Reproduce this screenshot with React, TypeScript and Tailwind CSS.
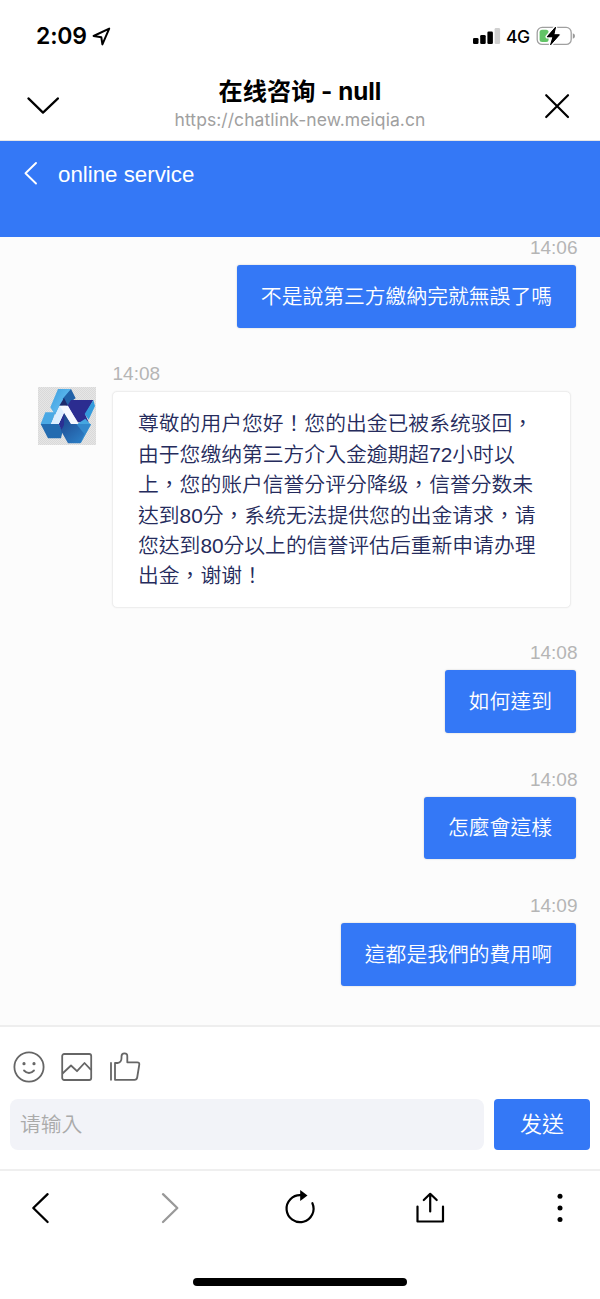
import React from "react";

const sans = "font-['Liberation_Sans','Noto_Sans_CJK_TC',sans-serif]";

function StatusBar() {
  return (
    <div className="flex h-[72px] items-center justify-between pl-9 pr-[24px] font-['Inter',sans-serif]">
      <div className="flex items-center">
        <span className="w-[52px] whitespace-nowrap pt-px text-[23px] font-semibold leading-none tracking-[-0.2px]">2:09</span>
        <svg className="ml-[3px]" width="22" height="22" viewBox="0 0 22 22" fill="none" stroke="#000" strokeWidth="2" strokeLinejoin="round">
          <path d="M2.6 11 18.2 3.6 11.4 19.4 10.3 12.2Z" />
        </svg>
      </div>
      <div className="flex items-center">
        <svg width="28" height="18" viewBox="0 0 28 18">
          <rect x="0" y="11" width="5.5" height="6" rx="1.3" />
          <rect x="7.2" y="8" width="5.5" height="9" rx="1.3" />
          <rect x="14.4" y="4.5" width="5.5" height="12.5" rx="1.3" />
          <rect x="21.6" y="1" width="5.5" height="16" rx="1.3" fill="#d0d0d0" />
        </svg>
        <span className="ml-[5px] w-[25px] whitespace-nowrap pt-[2px] text-[17.5px] font-medium leading-none tracking-[-0.4px]">4G</span>
        <svg className="ml-[5px]" width="40" height="22" viewBox="0 0 40 22">
          <rect x="1.2" y="2.4" width="34" height="17" rx="5" fill="#fff" stroke="#a0a0a0" strokeWidth="1.3" />
          <rect x="3.6" y="4.8" width="9" height="12.2" rx="2.5" fill="#62c466" />
          <path d="M36.8 8.2q2.2.7 2.2 2.8t-2.2 2.8Z" fill="#999" />
          <path d="M19.5 2.2 11.2 11.8H17L14.6 19.8 23.4 9.8H17.8Z" fill="#000" stroke="#fff" strokeWidth="3.6" strokeLinejoin="round" paintOrder="stroke" />
          <path d="M19.5 2.2 11.2 11.8H17L14.6 19.8 23.4 9.8H17.8Z" fill="#000" stroke="#000" strokeWidth="1" strokeLinejoin="round" />
        </svg>
      </div>
    </div>
  );
}

function TitleBar() {
  return (
    <div className="flex h-[69px] items-start justify-between border-b border-[#e6e6e6] px-[26px]">
      <svg className="mt-[21px]" width="34" height="24" viewBox="0 0 34 24" fill="none" stroke="#000" strokeWidth="2.2" strokeLinecap="round" strokeLinejoin="round">
        <path d="M2.4 5.4 17 19.6 32 5.4" />
      </svg>
      <div className="flex flex-col items-center">
        <div className="mt-[6px] whitespace-nowrap text-[24.2px] font-bold leading-[28px] font-['Inter','Noto_Sans_CJK_SC',sans-serif]">在线咨询 - null</div>
        <div className="mt-[4px] whitespace-nowrap text-[17.5px] leading-[20px] tracking-[0.07px] text-[#a0a0a0] font-['Inter',sans-serif]">https://chatlink-new.meiqia.cn</div>
      </div>
      <svg className="mt-[21px]" width="34" height="26" viewBox="-4 0 34 26" fill="none" stroke="#000" strokeWidth="2.2" strokeLinecap="round">
        <path d="M2.2 2.2 24 24M24 2.2 2.2 24" />
      </svg>
    </div>
  );
}

function Time({ children }: { children: string }) {
  return <div className="h-[22px] text-[19px] leading-[22px] text-[#b5b5b5]">{children}</div>;
}

function Sent({ time, text }: { time: string; text: string }) {
  return (
    <div className="mb-[35.3px] flex flex-col items-end pr-6">
      <div className="-mr-[1.5px]"><Time>{time}</Time></div>
      <div className="mt-[6px] flex h-[62.5px] items-center whitespace-nowrap rounded-[3px] bg-[#3478f6] px-[24px] pt-px text-[20.8px] font-[350] leading-[30.4px] text-white shadow-[0_0_2px_rgba(0,0,0,0.2)] mb-[0.5px]">{text}</div>
    </div>
  );
}

const replyLines = [
  "尊敬的用户您好！您的出金已被系统驳回，",
  "由于您缴纳第三方介入金逾期超72小时以",
  "上，您的账户信誉分评分降级，信誉分数未",
  "达到80分，系统无法提供您的出金请求，请",
  "您达到80分以上的信誉评估后重新申请办理",
  "出金，谢谢！",
];

function Logo() {
  return (
    <svg className="mt-[24px] shrink-0" width="58" height="58" viewBox="6 9 174 174">
      <defs>
        <pattern id="checker" width="6" height="6" patternUnits="userSpaceOnUse">
          <rect width="6" height="6" fill="#e6e6e6" />
          <path d="M0 0h3v3H0zM3 3h3v3H3z" fill="#d9d9d9" />
        </pattern>
        <linearGradient id="sky" x1="0" y1="0" x2="1" y2="1">
          <stop offset="0" stopColor="#3b9ddd" />
          <stop offset="0.5" stopColor="#58b4ec" />
          <stop offset="1" stopColor="#2a80c4" />
        </linearGradient>
        <linearGradient id="deep" x1="0" y1="0" x2="0.6" y2="1">
          <stop offset="0" stopColor="#1b3f86" />
          <stop offset="1" stopColor="#2b79c0" />
        </linearGradient>
      </defs>
      <rect x="6" y="9" width="174" height="174" fill="url(#checker)" />
      <path d="M66 15H105L62 100 43 70Z" fill="url(#sky)" />
      <path d="M105 15 119 43 108 50 92 68 80 44Z" fill="#2161a8" />
      <path d="M84 42 96 65H70Z" fill="#1c2a6c" />
      <path d="M105 48H172L148 92 158 115H126L94 65Z" fill="#2b2c90" />
      <path d="M172 48 177 66 158 107 146 90Z" fill="#349bdc" />
      <path d="M28 85H58L46 120H14Z" fill="#4aa8e4" />
      <path d="M14 120H68L80 141 75 163H36Z" fill="#236bb0" />
      <path d="M68 120 84 85 105 120 96 150H82Z" fill="#2a3093" />
      <path d="M123 120 148 104 165 122 134 178 112 150Z" fill="#45a6e0" />
      <path d="M118 120H165L134 178 110 152Z" fill="#3388cc" />
      <path d="M84 85 105 120H121L145 150 132 178H96L75 140 84 123Z" fill="url(#deep)" />
      <path d="M71 65H96L127 120H105L84 86 68 120H45Z" fill="#f5f8ff" />
      <path d="M71 65 84 86 68 120H45Z" fill="#dceeff" />
    </svg>
  );
}

function Received() {
  return (
    <div className="mb-[34.7px] flex pl-[38px]">
      <Logo />
      <div className="ml-4">
        <div className="pl-[0.5px]"><Time>14:08</Time></div>
        <div className="mt-[6px] h-[216.5px] w-[459px] rounded-[5px] border border-[#eeeeee] bg-white pl-[25px] pt-[17px] text-[20.8px] font-[350] leading-[30.4px] text-[#252b5c] shadow-[0_0_2px_rgba(0,0,0,0.06)]">
          {replyLines.map((line) => (
            <div key={line} className="whitespace-nowrap">{line}</div>
          ))}
        </div>
      </div>
    </div>
  );
}

function Composer() {
  return (
    <div className="h-[144px] border-t-2 border-[#eeeeee] bg-white px-[10px]">
      <div className="flex h-[72px] items-center pl-[2px] pt-[7px]">
        <svg width="34" height="34" viewBox="0 0 34 34" fill="none" stroke="#666" strokeWidth="1.8" strokeLinecap="round">
          <circle cx="17" cy="17" r="14.6" />
          <path d="M12 20.5Q17 25.5 22 20.5" />
          <circle cx="12" cy="13.7" r="1" fill="#666" strokeWidth="1.2" />
          <circle cx="22" cy="13.7" r="1" fill="#666" strokeWidth="1.2" />
        </svg>
        <svg className="ml-[14px]" width="34" height="34" viewBox="0 0 34 34" fill="none" stroke="#666" strokeWidth="1.8" strokeLinejoin="round">
          <rect x="2.2" y="4" width="29" height="26" rx="2" />
          <path d="M2.5 23.5 11 15.5 17 21.2 24.5 13 31 19.8" />
        </svg>
        <svg className="ml-[14px]" width="34" height="34" viewBox="0 0 34 34" fill="none" stroke="#666" strokeWidth="1.8" strokeLinejoin="round" strokeLinecap="round">
          <path d="M3 13V29.8M7 13H9.5Q13.5 12.5 13.5 8V6.5Q13.5 3.3 16.5 3.3T19.3 6.5V12.3H29.3Q31.5 12.3 31.3 14.5L29.2 27.5Q28.8 29.8 26.5 29.8H7Z" />
        </svg>
      </div>
      <div className={"flex h-[51px] gap-[10px] text-[20.8px] font-[350] " + sans}>
        <div className="flex flex-1 items-center rounded-[8px] bg-[#f2f3f8] pl-[10px] text-[#aaaaaa]">请输入</div>
        <button className="flex w-[96px] items-center justify-center rounded-[4px] bg-[#3478f6] text-[22px] text-white">发送</button>
      </div>
    </div>
  );
}

function BrowserNav() {
  return (
    <div className="flex h-[130px] flex-col items-center border-t-2 border-[#efefef] bg-white">
      <div className="flex h-[74px] w-full items-center justify-between px-[22px]">
        <svg width="36" height="36" viewBox="0 0 36 36" fill="none" stroke="#000" strokeWidth="2.3" strokeLinecap="round" strokeLinejoin="round">
          <path d="M25.6 4.2 11.3 18 25.6 32" />
        </svg>
        <svg width="36" height="36" viewBox="0 0 36 36" fill="none" stroke="#999" strokeWidth="2.3" strokeLinecap="round" strokeLinejoin="round">
          <path d="M11 4.2 25.3 18 11 32" />
        </svg>
        <svg width="36" height="36" viewBox="0 0 36 36" fill="none" stroke="#000" strokeWidth="2.2" strokeLinecap="round">
          <path d="M19 5.2A13.5 13.5 0 1 0 30.4 13.2" />
          <path d="M18.2 0 25.5 5.5 18.2 11Z" fill="#000" stroke="none" />
        </svg>
        <svg width="36" height="36" viewBox="0 0 36 36" fill="none" stroke="#000" strokeWidth="2.2" strokeLinecap="round" strokeLinejoin="round">
          <path d="M5.5 16.5V31.5H31V16.5M18.2 21.5V4M11.8 10 18.2 3.8 24.7 10" />
        </svg>
        <svg width="36" height="36" viewBox="0 0 36 36">
          <circle cx="18" cy="6.3" r="2.5" />
          <circle cx="18" cy="18" r="2.5" />
          <circle cx="18" cy="29.5" r="2.5" />
        </svg>
      </div>
      <div className="mt-[33px] h-2 w-[214px] rounded-full bg-black" />
    </div>
  );
}

export default function App() {
  return (
    <div className="flex h-[1299px] w-[600px] flex-col overflow-hidden bg-white text-black">
      <StatusBar />
      <TitleBar />
      <header className={"flex h-24 shrink-0 items-start bg-[#3478f6] pl-[23px] pt-[20px] text-white " + sans}>
        <svg width="16" height="26" viewBox="0 0 16 26" fill="none" stroke="currentColor" strokeWidth="1.9" strokeLinecap="round" strokeLinejoin="round">
          <path d="M13 2 2.5 12.3 13 22.5" />
        </svg>
        <h1 className="ml-[19px] text-[22.3px] leading-[27px]">online service</h1>
      </header>
      <main className={"h-[788px] shrink-0 overflow-hidden bg-[#fcfcfc] " + sans}>
        <Sent time="14:06" text="不是說第三方繳納完就無誤了嗎" />
        <Received />
        <Sent time="14:08" text="如何達到" />
        <Sent time="14:08" text="怎麼會這樣" />
        <Sent time="14:09" text="這都是我們的費用啊" />
      </main>
      <Composer />
      <BrowserNav />
    </div>
  );
}
